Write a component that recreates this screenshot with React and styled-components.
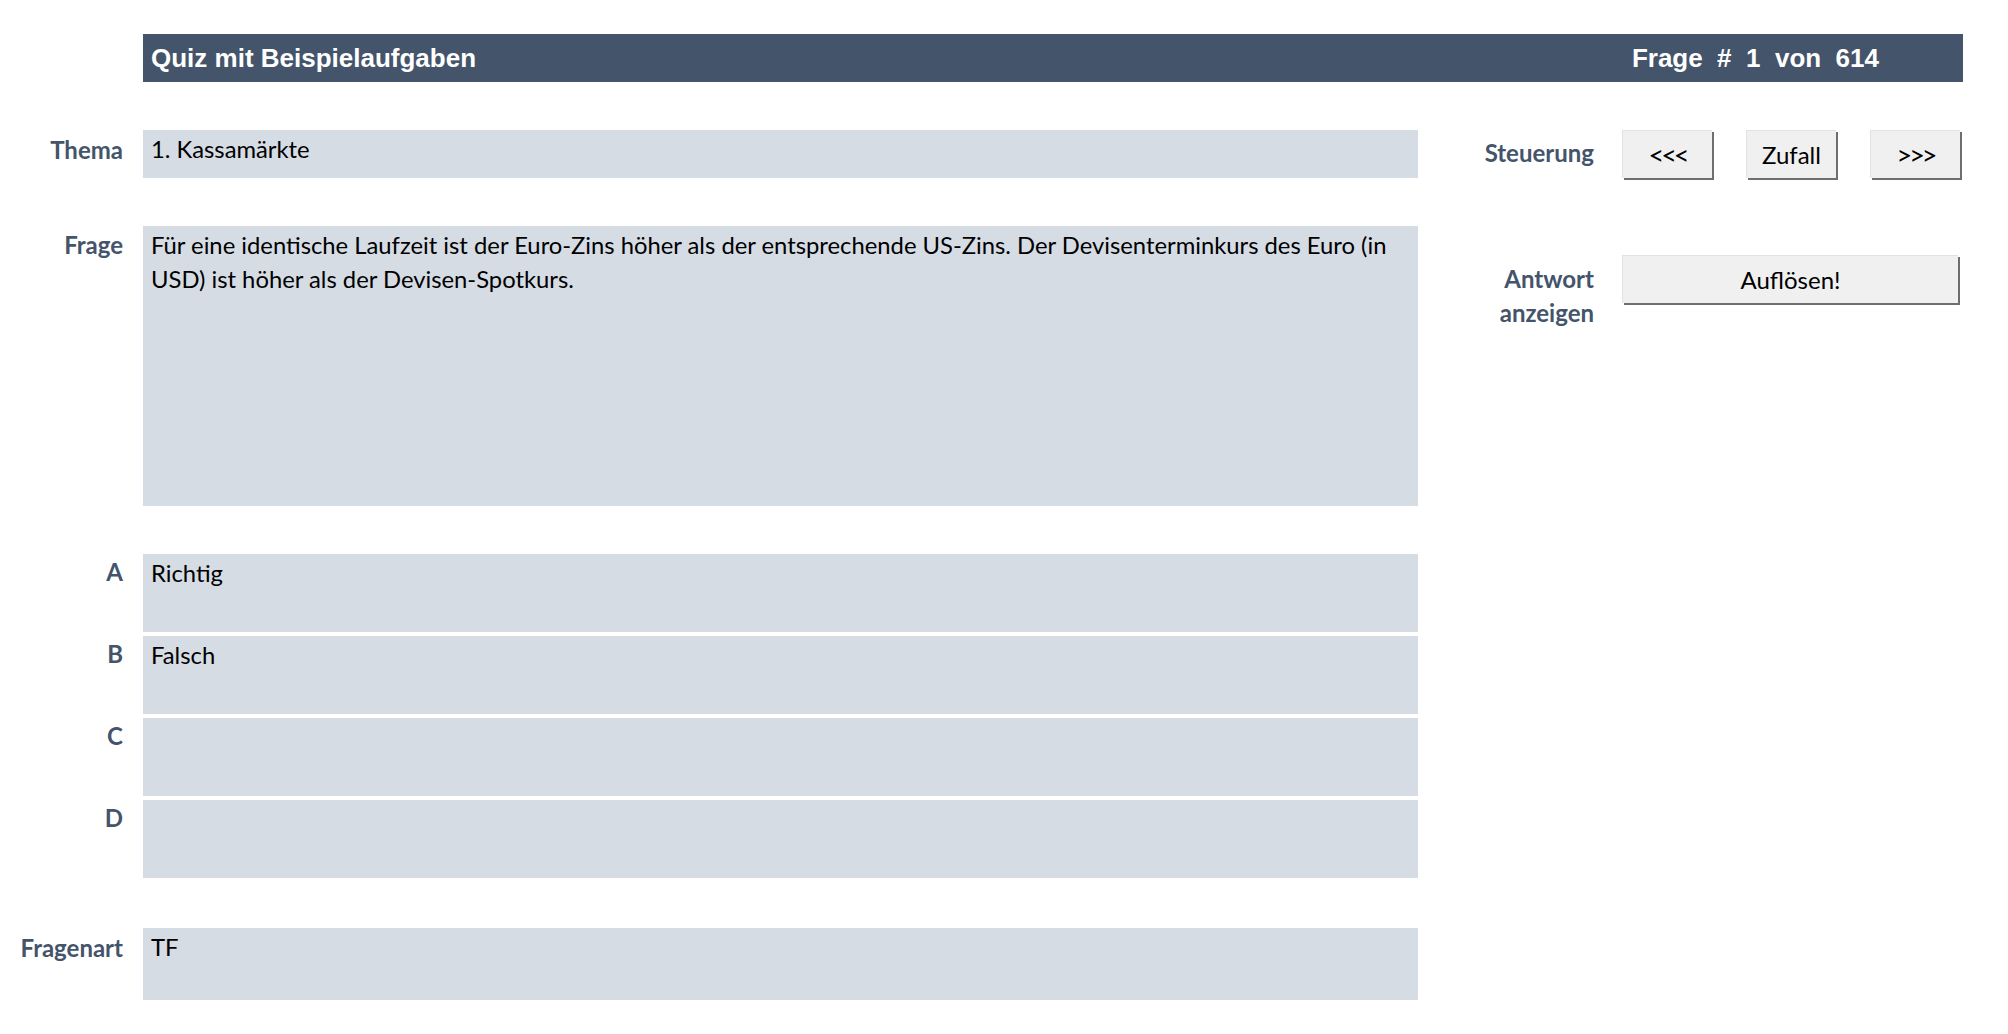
import React from 'react';
import styled, { createGlobalStyle } from 'styled-components';

const colors = {
  slate: '#44546A',
  cell: '#D6DCE4',
  button: '#F0F0F0',
  buttonEdge: '#6E6E6E',
  text: '#000000',
};

const GlobalStyle = createGlobalStyle`
  html, body {
    margin: 0;
    padding: 0;
    background: #ffffff;
  }
  body {
    font-family: Lato, "Open Sans", sans-serif;
  }
`;

const Page = styled.div`
  width: 2008px;
  height: 1034px;
  padding-top: 34px;
  box-sizing: border-box;
  overflow: hidden;
`;

const Header = styled.div`
  margin-left: 143px;
  width: 1820px;
  height: 48px;
  box-sizing: border-box;
  background: ${colors.slate};
  display: flex;
  align-items: center;
  justify-content: space-between;
  padding: 0 84px 0 8px;
  color: #ffffff;
  font-family: "Liberation Sans", Arial, sans-serif;
  font-weight: 700;
  font-size: 26px;
  white-space: pre;
`;

const Main = styled.div`
  display: flex;
  margin-top: 48px;
`;

const Form = styled.div`
  display: grid;
  grid-template-columns: 123px 1275px;
  column-gap: 20px;
  align-content: start;
`;

const Label = styled.div`
  font-weight: 700;
  font-size: 24px;
  line-height: 34px;
  color: ${colors.slate};
  text-align: right;
  margin-top: ${({ top }) => top || 0}px;
`;

const Cell = styled.div`
  background: ${colors.cell};
  height: ${({ h }) => h}px;
  margin-top: ${({ top }) => top || 0}px;
  box-sizing: border-box;
  padding: 2px 8px 0;
  font-size: 23.8px;
  line-height: 34px;
  color: ${colors.text};
`;

const Controls = styled.div`
  display: grid;
  grid-template-columns: 134px 338px;
  column-gap: 28px;
  margin-left: 42px;
  align-content: start;
`;

const SideLabel = styled.div`
  font-weight: 700;
  font-size: 24px;
  line-height: 34px;
  color: ${colors.slate};
  text-align: right;
  margin-top: ${({ top }) => top || 0}px;
`;

const ButtonRow = styled.div`
  display: flex;
  justify-content: space-between;
  margin-top: ${({ top }) => top || 0}px;
`;

const Button = styled.button`
  width: ${({ wide }) => (wide ? '336px' : '90px')};
  height: 48px;
  box-sizing: border-box;
  border: none;
  border-top: 1px solid #e2e2e2;
  border-left: 1px solid #e2e2e2;
  background: ${colors.button};
  box-shadow: 2px 2px 0 ${colors.buttonEdge};
  font-family: Lato, "Open Sans", sans-serif;
  font-size: ${({ tight }) => (tight ? '27px' : '24px')};
  letter-spacing: ${({ tight }) => (tight ? '-3px' : '0')};
  color: ${colors.text};
  padding: 0;
  cursor: pointer;
`;

const options = [
  { key: 'A', text: 'Richtig', top: 48 },
  { key: 'B', text: 'Falsch', top: 4 },
  { key: 'C', text: '', top: 4 },
  { key: 'D', text: '', top: 4 },
];

const App = () => {
  return (
    <Page>
      <GlobalStyle />
      <Header>
        <span>Quiz mit Beispielaufgaben</span>
        <span>Frage  #  1  von  614</span>
      </Header>
      <Main>
        <Form>
          <Label top={3}>Thema</Label>
          <Cell h={48}>1. Kassamärkte</Cell>

          <Label top={50}>Frage</Label>
          <Cell h={280} top={48}>
            Für eine identische Laufzeit ist der Euro-Zins höher als der entsprechende US-Zins. Der Devisenterminkurs des Euro (in USD) ist höher als der Devisen-Spotkurs.
          </Cell>

          {options.map((o) => (
            <React.Fragment key={o.key}>
              <Label top={o.top + 1}>{o.key}</Label>
              <Cell h={78} top={o.top}>{o.text}</Cell>
            </React.Fragment>
          ))}

          <Label top={53}>Fragenart</Label>
          <Cell h={72} top={50}>TF</Cell>
        </Form>

        <Controls>
          <SideLabel top={6}>Steuerung</SideLabel>
          <ButtonRow>
            <Button tight>&lt;&lt;&lt;</Button>
            <Button>Zufall</Button>
            <Button tight>&gt;&gt;&gt;</Button>
          </ButtonRow>

          <SideLabel top={84}>Antwort<br />anzeigen</SideLabel>
          <ButtonRow top={77}>
            <Button wide>Auflösen!</Button>
          </ButtonRow>
        </Controls>
      </Main>
    </Page>
  );
};

export default App;
